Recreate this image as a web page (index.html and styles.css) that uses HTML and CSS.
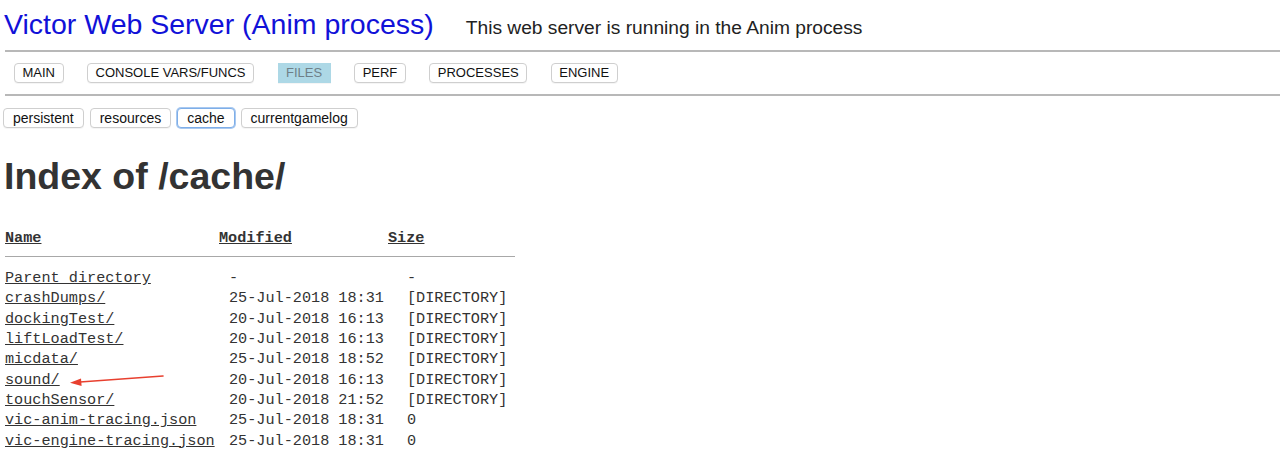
FILE: index.html
```html
<!DOCTYPE html>
<html>
<head>
<meta charset="utf-8">
<title>Victor Web Server</title>
<link rel="stylesheet" href="styles.css">
</head>
<body>
<header class="top">
  <a class="title" href="#">Victor Web Server (Anim process)</a>
  <span class="subtitle">This web server is running in the Anim process</span>
</header>
<hr class="rule">
<nav class="tabs">
  <button class="btn">MAIN</button>
  <button class="btn">CONSOLE VARS/FUNCS</button>
  <button class="btn active">FILES</button>
  <button class="btn">PERF</button>
  <button class="btn">PROCESSES</button>
  <button class="btn">ENGINE</button>
</nav>
<hr class="rule">
<div class="subtabs">
  <button class="btn small">persistent</button>
  <button class="btn small">resources</button>
  <button class="btn small focused">cache</button>
  <button class="btn small">currentgamelog</button>
</div>
<div class="listing">
<h1 class="heading">Index of /cache/</h1>
<table class="files">
  <thead>
    <tr><th class="c-name"><a href="#">Name</a></th><th class="c-mod"><a href="#">Modified</a></th><th class="c-size"><a href="#">Size</a></th></tr>
    <tr><th colspan="3" class="sep"><div class="line"></div></th></tr>
  </thead>
  <tbody>
    <tr><td><a href="#">Parent directory</a></td><td class="mod">-</td><td class="size">-</td></tr>
    <tr><td><a href="#">crashDumps/</a></td><td class="mod">25-Jul-2018 18:31</td><td class="size">[DIRECTORY]</td></tr>
    <tr><td><a href="#">dockingTest/</a></td><td class="mod">20-Jul-2018 16:13</td><td class="size">[DIRECTORY]</td></tr>
    <tr><td><a href="#">liftLoadTest/</a></td><td class="mod">20-Jul-2018 16:13</td><td class="size">[DIRECTORY]</td></tr>
    <tr><td><a href="#">micdata/</a></td><td class="mod">25-Jul-2018 18:52</td><td class="size">[DIRECTORY]</td></tr>
    <tr><td><a href="#">sound/</a></td><td class="mod">20-Jul-2018 16:13</td><td class="size">[DIRECTORY]</td></tr>
    <tr><td><a href="#">touchSensor/</a></td><td class="mod">20-Jul-2018 21:52</td><td class="size">[DIRECTORY]</td></tr>
    <tr><td><a href="#">vic-anim-tracing.json</a></td><td class="mod">25-Jul-2018 18:31</td><td class="size">0</td></tr>
    <tr><td><a href="#">vic-engine-tracing.json</a></td><td class="mod">25-Jul-2018 18:31</td><td class="size">0</td></tr>
  </tbody>
</table>
<svg class="arrow" width="110" height="20" viewBox="0 0 110 20">
  <line x1="95" y1="4" x2="12" y2="10" stroke="#e8402f" stroke-width="1.6" stroke-linecap="round"/>
  <polygon points="2,10.8 13,6.4 13.6,14" fill="#e8402f"/>
</svg>
</div>
</body>
</html>
```
FILE: styles.css
```css
html, body {
  margin: 0;
  padding: 0;
  background: #ffffff;
}
body {
  padding-left: 4px;
  font-family: "Liberation Sans", Arial, sans-serif;
  color: #222;
}
.top {
  display: flex;
  align-items: baseline;
  gap: 32px;
  height: 50px;
  padding-top: 4px;
  box-sizing: border-box;
}
.title {
  font-size: 28.5px;
  color: #1111d8;
  text-decoration: none;
  line-height: 40px;
}
.subtitle {
  font-size: 19.2px;
  color: #222;
}
.rule {
  margin: 0 0 0 1px;
  border: 0;
  border-top: 2px solid #b8b8b8;
  height: 0;
}
.tabs {
  display: flex;
  gap: 23.5px;
  padding: 11px 0 0 10px;
  height: 42px;
  box-sizing: border-box;
}
.btn {
  font-family: "Liberation Sans", Arial, sans-serif;
  font-size: 13px;
  color: #111;
  background: #fff;
  border: 1px solid #cfcfcf;
  border-radius: 4px;
  height: 20px;
  padding: 0 7.5px;
  line-height: 18px;
  box-shadow: 0 1px 0 rgba(0,0,0,0.04);
}
.btn.active {
  background: #add8e6;
  color: #6f7f88;
  border-color: #add8e6;
  border-radius: 0;
}
.subtabs {
  display: flex;
  gap: 6px;
  padding: 12px 0 0 0;
  margin-left: -1px;
}
.btn.small {
  font-size: 14px;
  padding: 0 9px;
}
.btn.focused {
  border-color: #7eaee8;
  box-shadow: 0 0 0 1px #a9c9f0;
}
.listing {
  position: relative;
}
.heading {
  font-size: 37.5px;
  font-weight: bold;
  color: #333;
  margin: 26px 0 0 0;
  line-height: 44px;
}
.files {
  font-family: "Liberation Mono", "Courier New", monospace;
  font-size: 15.2px;
  color: #333;
  border-collapse: collapse;
  margin-top: 30px;
  margin-left: 1px;
}
.files a {
  color: #333;
  text-decoration: underline;
}
.files th {
  text-align: left;
  font-weight: bold;
  padding: 0;
  height: 20px;
}
.files th a { color: #333; }
.c-name { width: 214px; }
.c-mod { width: 169px; }
.c-size { width: 128px; }
.files th.sep {
  height: 12px;
  padding: 8px 0 0 0;
  vertical-align: top;
}
.line {
  border-top: 1px solid #a8a8a8;
  width: 510px;
}
.files td {
  padding: 0;
  height: 20.3px;
  line-height: 20px;
  white-space: nowrap;
}
.files td.mod { padding-left: 10px; }
.files td.size { padding-left: 19px; }
.arrow {
  position: absolute;
  left: 64px;
  top: 218px;
}
```
